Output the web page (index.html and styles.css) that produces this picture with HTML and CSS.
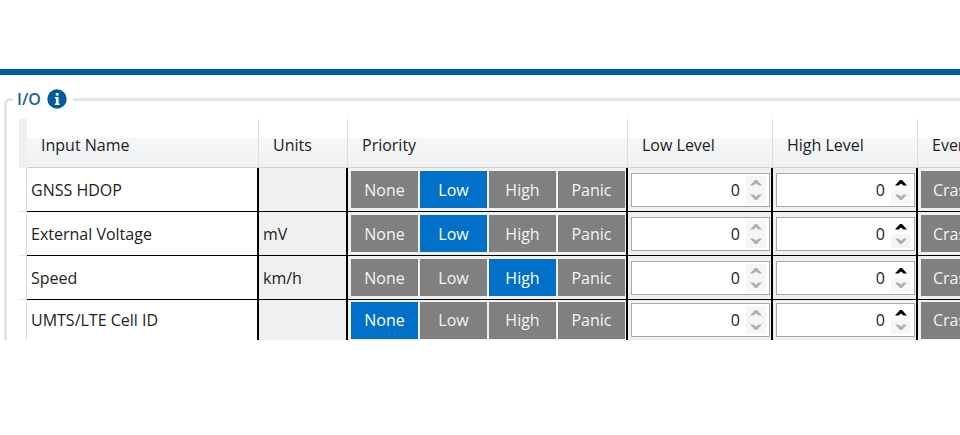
FILE: index.html
```
<!DOCTYPE html>
<html lang="en">
<head>
<meta charset="UTF-8">
<title>I/O</title>
<link rel="stylesheet" href="styles.css">
</head>
<body>
<main class="window">
	<fieldset class="panel">
		<legend>I/O
			<svg class="info" viewBox="0 0 20 20" aria-hidden="true">
				<circle cx="10" cy="10" r="9.7" fill="#005a9e"/>
				<rect x="8.8" y="4" width="2.8" height="2.6" fill="#fff"/>
				<path d="M7.8 8h3.8v6.6h1V16H7.8v-1.4h1.1V9.4H7.8z" fill="#fff"/>
			</svg>
		</legend>
		<table class="grid">
			<colgroup>
				<col class="c-mark"><col class="c-name"><col class="c-units"><col class="c-priority">
				<col class="c-level"><col class="c-level"><col class="c-event">
			</colgroup>
			<thead>
				<tr>
					<td class="mark"></td>
					<th>Input Name</th>
					<th>Units</th>
					<th>Priority</th>
					<th>Low Level</th>
					<th>High Level</th>
					<th>Event</th>
				</tr>
			</thead>
			<tbody id="rows"></tbody>
		</table>
	</fieldset>
</main>
<script src="script.js"></script>
</body>
</html>
```
FILE: styles.css
```
*{
	box-sizing: border-box;
}
body{
	margin: 0;
	background: #fff;
	color: #222;
	font-family: "Open Sans", "Noto Sans", sans-serif;
	font-size: 16px;
}
.window{
	margin-top: 69px;
	padding: 14px 0 0 4px;
	border-top: 6px solid #005a9e;
	overflow: hidden;
}
.panel{
	min-width: 0;
	margin: 0;
	padding: 10px 0 0 12px;
	border: 3px solid #e2e5e8;
	border-width: 3px 0 0 3px;
	border-top-left-radius: 6px;
	overflow: hidden;
}
legend{
	display: flex;
	align-items: center;
	gap: 6px;
	margin-left: -6px;
	padding: 0 6px 0 4px;
	color: #1f5f95;
	font-weight: 600;
	line-height: 20px;
}
.info{
	width: 20px;
	height: 20px;
}
.grid{
	width: 100%;
	min-width: 1000px;
	border-collapse: separate;
	border-spacing: 0;
	table-layout: fixed;
}
.c-mark{ width: 8px; }
.c-name{ width: 232px; }
.c-units{ width: 89px; }
.c-priority{ width: 280px; }
.c-level{ width: 145px; }
th{
	height: 49px;
	padding: 3px 0 0 14px;
	border-right: 1px solid #dcdddf;
	border-bottom: 1px solid #d0d2d4;
	background: linear-gradient(#fff 38%, #f5f6f8 42%, #f0f1f3);
	font-weight: 400;
	text-align: left;
	white-space: nowrap;
	overflow: hidden;
}
td{
	height: 44px;
	padding: 0 0 0 4px;
	border-right: 2px solid #000;
	border-bottom: 1px solid #000;
	background: #f0f0f0;
	white-space: nowrap;
	overflow: hidden;
}
thead .mark{
	border: 0;
	background: #f0f0f0;
}
tbody .mark{
	border-right: 1px solid #d5dbe2;
	border-bottom: 1px solid #e4e6e8;
	background: #fff;
}
tbody .name{
	background: #fff;
}
tbody tr:last-child td{
	height: 40px;
	border-bottom: 0;
}
tbody .tools{
	padding: 0 1px 0 3px;
}
.choices{
	display: grid;
	grid-template-columns: repeat(4, 1fr);
	gap: 2px;
}
button{
	padding: 0;
	border: 0;
	font: inherit;
}
.choice{
	width: 100%;
	height: 37px;
	background: #808080;
	color: #f4f4f4;
}
.choice.on{
	background: #0070c8;
	color: #fff;
}
.event{
	padding-left: 12px;
	text-align: left;
}
.number{
	display: flex;
	align-items: center;
	height: 34px;
	padding-right: 3px;
	border: 1px solid #a9a9a9;
	background: #fff;
}
.number input{
	flex: 1;
	min-width: 0;
	padding: 0 6px 0 0;
	border: 0;
	background: none;
	color: inherit;
	font: inherit;
	text-align: right;
}
.spin{
	display: grid;
	width: 20px;
}
.spin button{
	height: 14px;
	background: #f6f6f6;
	color: #b0b0b0;
	line-height: 0;
}
.spin .active{
	background: #fff;
	color: #000;
}
.spin svg{
	width: 12px;
	height: 6px;
}
```
FILE: script.js
```
var rows = [
	{name: "GNSS HDOP", units: "", priority: "Low"},
	{name: "External Voltage", units: "mV", priority: "Low"},
	{name: "Speed", units: "km/h", priority: "High"},
	{name: "UMTS/LTE Cell ID", units: "", priority: "None"}
];
var levels = ["None", "Low", "High", "Panic"];

function choices(row){
	return levels.map(function(level){
		var on = level == row.priority;
		return '<button type="button" class="choice' + (on ? ' on' : '') + '" aria-pressed="' + on + '">' + level + '</button>';
	}).join("");
}

// up arrow is black only where the value can be raised
function number(label, canRaise){
	return '<div class="number"><input type="text" value="0" aria-label="' + label + '">' +
		'<span class="spin">' +
		'<button type="button" aria-label="Increase"' + (canRaise ? ' class="active"' : '') + '>' +
		'<svg viewBox="0 0 12 6"><path d="M0 5.5L5 0h2l5 5.5H8.6L6 3.4 3.4 5.5z" fill="currentColor"/></svg></button>' +
		'<button type="button" aria-label="Decrease">' +
		'<svg viewBox="0 0 12 6"><path d="M0 .5L5 6h2l5-5.5H8.6L6 2.6 3.4.5z" fill="currentColor"/></svg></button>' +
		'</span></div>';
}

document.getElementById("rows").innerHTML = rows.map(function(row){
	return '<tr><td class="mark"></td>' +
		'<td class="name">' + row.name + '</td>' +
		'<td>' + row.units + '</td>' +
		'<td class="tools"><div class="choices">' + choices(row) + '</div></td>' +
		'<td class="tools">' + number(row.name + " low level", false) + '</td>' +
		'<td class="tools">' + number(row.name + " high level", true) + '</td>' +
		'<td class="tools"><button type="button" class="choice event">Crash</button></td></tr>';
}).join("");
```
